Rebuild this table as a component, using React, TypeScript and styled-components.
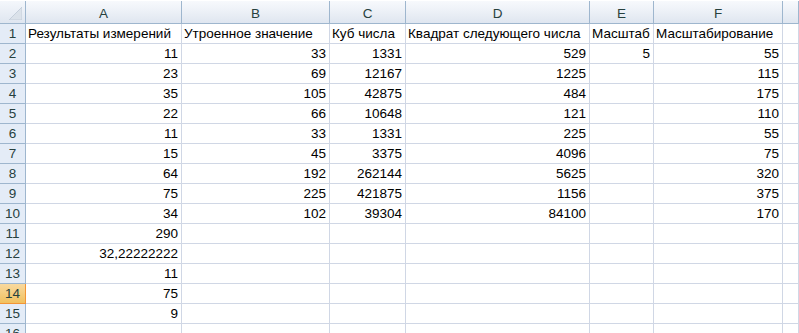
import React from 'react';
import styled, { createGlobalStyle } from 'styled-components';

const GlobalStyle = createGlobalStyle`
  html, body {
    margin: 0;
    padding: 0;
    background: #ffffff;
  }
  body {
    font-family: 'Liberation Sans', Arial, sans-serif;
  }
`;

const columns = ['A', 'B', 'C', 'D', 'E', 'F', ''];

const rows: string[][] = [
  ['Результаты измерений', 'Утроенное значение', 'Куб числа', 'Квадрат следующего числа', 'Масштаб', 'Масштабирование'],
  ['11', '33', '1331', '529', '5', '55'],
  ['23', '69', '12167', '1225', '', '115'],
  ['35', '105', '42875', '484', '', '175'],
  ['22', '66', '10648', '121', '', '110'],
  ['11', '33', '1331', '225', '', '55'],
  ['15', '45', '3375', '4096', '', '75'],
  ['64', '192', '262144', '5625', '', '320'],
  ['75', '225', '421875', '1156', '', '375'],
  ['34', '102', '39304', '84100', '', '170'],
  ['290'],
  ['32,22222222'],
  ['11'],
  ['75'],
  ['9'],
  [],
];

const SELECTED_ROW = 14;

const Sheet = styled.div`
  padding-top: 1px;
  display: grid;
  grid-template-columns: 26px 156px 148px 76px 184px 64px 129px 1fr;
  grid-template-rows: 23px;
  grid-auto-rows: 20px;
  width: 799px;
  height: 333px;
  overflow: hidden;
  box-sizing: border-box;
`;

const Corner = styled.div`
  box-sizing: border-box;
  background: linear-gradient(#f4f7fb, #dfe6f0);
  border-right: 1px solid #9eb6ce;
  border-bottom: 1px solid #9eb6ce;
  display: flex;
  align-items: flex-end;
  justify-content: flex-end;
  padding: 0 3px 3px 0;

  & svg {
    display: block;
  }
`;

const ColHeader = styled.div`
  box-sizing: border-box;
  background: linear-gradient(#f7f9fc 0%, #edf1f7 45%, #dfe6f0 100%);
  border-right: 1px solid #9eb6ce;
  border-bottom: 1px solid #9eb6ce;
  color: #27413e;
  font-size: 13.5px;
  display: flex;
  align-items: center;
  justify-content: center;
  padding-top: 2px;
`;

const RowHeader = styled.div<{ $selected?: boolean }>`
  box-sizing: border-box;
  background: ${(p) => (p.$selected ? 'linear-gradient(#f9d99f, #f1c15f)' : '#e4ecf7')};
  border-right: 1px solid ${(p) => (p.$selected ? '#f29536' : '#9eb6ce')};
  border-bottom: 1px solid ${(p) => (p.$selected ? '#f29536' : '#9eb6ce')};
  color: #27413e;
  font-size: 13.5px;
  line-height: 16px;
  display: flex;
  align-items: flex-end;
  justify-content: center;
  padding-bottom: 1px;
`;

const Cell = styled.div<{ $text?: boolean }>`
  box-sizing: border-box;
  border-right: 1px solid #d0d7e5;
  border-bottom: 1px solid #d0d7e5;
  color: #000000;
  font-size: 13.5px;
  line-height: 16px;
  white-space: nowrap;
  display: flex;
  align-items: flex-end;
  justify-content: ${(p) => (p.$text ? 'flex-start' : 'flex-end')};
  padding: 0 3px 1px 2px;
`;

function isText(v: string) {
  return v !== '' && !/^[0-9,]+$/.test(v);
}

function App() {
  return (
    <>
      <GlobalStyle />
      <Sheet>
        <Corner>
          <svg width="13" height="13" viewBox="0 0 13 13">
            <polygon points="13,0 13,13 0,13" fill="#dbe2ea" stroke="#c5cfdb" strokeWidth="1" />
          </svg>
        </Corner>
        {columns.map((c, i) => (
          <ColHeader key={`h${i}`}>{c}</ColHeader>
        ))}
        {rows.map((row, r) => (
          <React.Fragment key={r}>
            <RowHeader $selected={r + 1 === SELECTED_ROW}>{r + 1}</RowHeader>
            {columns.map((_, c) => {
              const v = row[c] ?? '';
              return (
                <Cell key={c} $text={isText(v)}>
                  {v}
                </Cell>
              );
            })}
          </React.Fragment>
        ))}
      </Sheet>
    </>
  );
}

export default App;
